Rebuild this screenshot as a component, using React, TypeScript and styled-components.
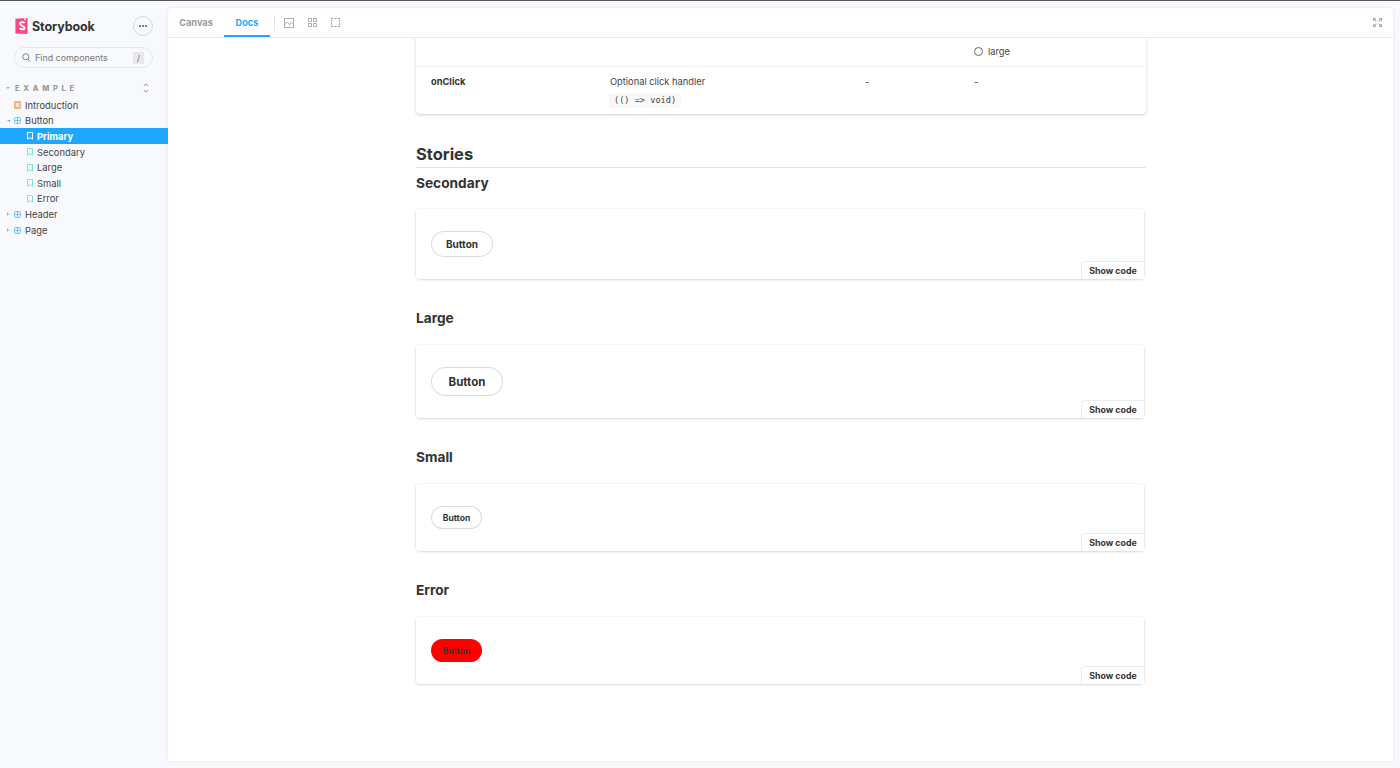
import React from 'react'
import styled, { createGlobalStyle } from 'styled-components'

const GlobalStyle = createGlobalStyle`
  html, body {
    margin: 0;
    padding: 0;
    height: 100%;
    overflow: hidden;
    background: #f6f9fc;
  }
  body {
    font-family: Inter, "Liberation Sans", sans-serif;
    color: #333;
  }
  * {
    box-sizing: border-box;
  }
`

const Shell = styled.div`
  display: flex;
  width: 1400px;
  height: 768px;
  border-top: 1px solid #55565a;
  background: #f7f9fd;
`

// SIDEBAR

const Sidebar = styled.aside`
  width: 168px;
  flex: none;
  padding-top: 15px;
`

const Brand = styled.div`
  display: flex;
  align-items: center;
  justify-content: space-between;
  height: 20px;
  padding: 0 15px;
`

const Logo = styled.div`
  display: flex;
  align-items: center;
  gap: 4px;
  font-size: 12.5px;
  font-weight: 700;
  letter-spacing: -0.1px;
  color: #333;
`

const MenuButton = styled.div`
  width: 20px;
  height: 20px;
  border-radius: 50%;
  border: 1px solid #d5d8dc;
  display: flex;
  align-items: center;
  justify-content: center;
  gap: 1px;
`

const Dot = styled.span`
  width: 2px;
  height: 2px;
  border-radius: 50%;
  background: #555;
`

const Search = styled.div`
  display: flex;
  align-items: center;
  height: 21px;
  margin: 11px 15px 0 14px;
  padding: 0 3px 0 7px;
  border: 1px solid #e3e6ea;
  border-radius: 11px;
  font-size: 8.9px;
  color: #777;
  gap: 4px;
`

const SearchLabel = styled.span`
  flex: 1;
`

const Kbd = styled.span`
  width: 11px;
  height: 12px;
  background: #e8e8e8;
  font-size: 8px;
  line-height: 12px;
  text-align: center;
  color: #666;
  margin-right: 5px;
`

const GroupHeading = styled.div`
  display: flex;
  align-items: center;
  height: 12px;
  margin-top: 14px;
  padding: 0 19px 0 6px;
  font-size: 7.5px;
  font-weight: 800;
  letter-spacing: 3.7px;
  color: #9a9a9a;
`

const GroupCaret = styled.span`
  width: 0;
  height: 0;
  border-left: 2px solid transparent;
  border-right: 2px solid transparent;
  border-top: 2px solid #aaa;
`

const GroupLabel = styled.span`
  flex: 1;
  padding-left: 5px;
`

const Tree = styled.div`
  margin-top: 3px;
`

const TreeRow = styled.div<{ $level?: number; $active?: boolean }>`
  display: flex;
  align-items: center;
  height: 15.6px;
  padding-top: 1px;
  padding-left: ${(p) => (p.$level === 1 ? 27 : 14)}px;
  gap: 4px;
  font-size: 9.4px;
  position: relative;
  font-weight: ${(p) => (p.$active ? 700 : 400)};
  color: ${(p) => (p.$active ? '#fff' : '#444')};
  background: ${(p) => (p.$active ? '#1ea7fd' : 'transparent')};
`

const Caret = styled.span<{ $open?: boolean }>`
  position: absolute;
  left: 7px;
  top: ${(p) => (p.$open ? 7 : 6)}px;
  width: 0;
  height: 0;
  ${(p) =>
    p.$open
      ? `border-left: 2px solid transparent; border-right: 2px solid transparent; border-top: 2px solid #aaa;`
      : `border-top: 2px solid transparent; border-bottom: 2px solid transparent; border-left: 2px solid #aaa;`}
`

// MAIN PANEL

const Panel = styled.main`
  width: 1225px;
  height: 753px;
  margin-top: 7px;
  background: #fff;
  border-radius: 4px 4px 0 0;
  box-shadow: 0 0 4px rgba(0, 0, 0, 0.08);
  overflow: hidden;
  display: flex;
  flex-direction: column;
`

const Toolbar = styled.div`
  display: flex;
  align-items: stretch;
  height: 29px;
  flex: none;
  box-shadow: 0 1px 0 #ececec;
  position: relative;
`

const Tab = styled.div<{ $active?: boolean }>`
  display: flex;
  align-items: center;
  justify-content: center;
  width: ${(p) => (p.$active ? 46 : 56)}px;
  padding-top: 2px;
  font-size: 9.2px;
  font-weight: 700;
  color: ${(p) => (p.$active ? '#1ea7fd' : '#999')};
  border-bottom: 2px solid ${(p) => (p.$active ? '#1ea7fd' : 'transparent')};
`

const Divider = styled.div`
  width: 1px;
  height: 16px;
  margin: 7px 9px 0 4px;
  background: #e4e4e4;
`

const Tools = styled.div`
  display: flex;
  align-items: center;
  gap: 14px;
`

const Spacer = styled.div`
  flex: 1;
`

const Expand = styled.div`
  display: flex;
  align-items: center;
  padding-right: 11px;
`

const Scroller = styled.div`
  flex: 1;
  overflow: hidden;
`

const Column = styled.div`
  width: 730px;
  margin-left: 248px;
`

const TableCard = styled.div`
  width: 730px;
  background: #fff;
  border-radius: 0 0 4px 4px;
  box-shadow: 0 1px 3px rgba(0, 0, 0, 0.2);
`

const TableRow = styled.div<{ $height: number; $ruled?: boolean }>`
  display: grid;
  grid-template-columns: 179px 255px 109px 1fr;
  height: ${(p) => p.$height}px;
  padding-left: 15px;
  border-bottom: ${(p) => (p.$ruled ? '1px solid #f0f0f0' : 'none')};
  font-size: 9.3px;
  color: #444;
`

const Cell = styled.div<{ $top: number }>`
  padding-top: ${(p) => p.$top}px;
`

const PropName = styled(Cell)`
  font-weight: 700;
  color: #333;
`

const Radio = styled.div`
  display: flex;
  align-items: center;
  gap: 5px;
`

const RadioMark = styled.span`
  width: 9px;
  height: 9px;
  border: 1px solid #666;
  border-radius: 50%;
`

const TypeCode = styled.code`
  display: inline-block;
  margin: 6px 0 0 -1px;
  padding: 0 5px;
  height: 15px;
  line-height: 15px;
  background: #f8f8f8;
  border-radius: 3px;
  font-family: "DejaVu Sans Mono", "Liberation Mono", monospace;
  font-size: 8.6px;
  color: #444;
`

const StoriesTitle = styled.h2`
  margin: 30px 0 0;
  height: 24px;
  line-height: 20px;
  font-size: 16.5px;
  font-weight: 700;
  color: #333;
  border-bottom: 1px solid #e2e2e2;
`

const StoryTitle = styled.h3<{ $top: number }>`
  margin: ${(p) => p.$top}px 0 0;
  height: 18px;
  line-height: 18px;
  font-size: 13.7px;
  font-weight: 700;
  color: #333;
`

const Preview = styled.div<{ $height: number; $gap: number }>`
  position: relative;
  width: 728px;
  height: ${(p) => p.$height}px;
  margin-top: ${(p) => p.$gap}px;
  padding-left: 15px;
  display: flex;
  align-items: center;
  background: #fff;
  border-radius: 4px;
  box-shadow: 0 1px 3px rgba(0, 0, 0, 0.13), 0 0 0 1px rgba(0, 0, 0, 0.03);
`

const sizes = {
  small: { w: 51, h: 23, font: 8.6 },
  medium: { w: 62, h: 26, font: 10 },
  large: { w: 72, h: 29, font: 11.5 },
}

const DemoButton = styled.div<{ $size: keyof typeof sizes; $error?: boolean }>`
  display: flex;
  align-items: center;
  justify-content: center;
  width: ${(p) => sizes[p.$size].w}px;
  height: ${(p) => sizes[p.$size].h}px;
  font-size: ${(p) => sizes[p.$size].font}px;
  font-weight: 700;
  color: #333;
  border-radius: 15px;
  background: ${(p) => (p.$error ? '#ff0000' : 'transparent')};
  box-shadow: ${(p) => (p.$error ? 'none' : 'inset 0 0 0 1px #dcdcdc')};
`

const ShowCode = styled.div`
  position: absolute;
  right: 0;
  bottom: 0;
  width: 63px;
  height: 18px;
  padding-bottom: 1px;
  display: flex;
  align-items: center;
  justify-content: center;
  font-size: 8.8px;
  font-weight: 700;
  color: #333;
  background: #fff;
  border-top: 1px solid #ececec;
  border-left: 1px solid #ececec;
  border-radius: 4px 0 0 0;
`

// ICONS

const StorybookMark = () => (
  <svg width="13" height="16" viewBox="0 0 13 16">
    <path d="M0.4 0.8 L12.6 0 V16 L0.4 15.4 Z" fill="#ff4785" />
    <path
      d="M9.6 5c-.6-.6-1.3-.9-2.3-.9-1.4 0-2.3.7-2.3 1.7 0 2.4 4.5 1.6 4.5 3.9 0 1-.9 1.6-2.2 1.6-1.1 0-2-.4-2.7-1.2"
      fill="none"
      stroke="#fff"
      strokeWidth="1.9"
    />
    <path d="M9.2 0.2 V2.4 L10 1.8 L10.8 2.4 V0.1 Z" fill="#fff" />
  </svg>
)

const SearchIcon = () => (
  <svg width="9" height="9" viewBox="0 0 10 10" fill="none" stroke="#777" strokeWidth="1">
    <circle cx="4.2" cy="4.2" r="3.4" />
    <path d="M6.8 6.8 L9.4 9.4" />
  </svg>
)

const SortIcon = () => (
  <svg width="6" height="10" viewBox="0 0 6 10" fill="none" stroke="#888" strokeWidth="0.9">
    <path d="M0.8 3 L3 0.9 L5.2 3" />
    <path d="M0.8 7 L3 9.1 L5.2 7" />
  </svg>
)

const DocIcon = () => (
  <svg width="7" height="8" viewBox="0 0 7 8">
    <rect width="7" height="8" rx="1" fill="#f5b27a" />
    <rect x="1.7" y="2" width="3.6" height="4" fill="#fde6d0" />
  </svg>
)

const ComponentIcon = () => (
  <svg width="7" height="7" viewBox="0 0 7 7" fill="none" stroke="#7cc0f2" strokeWidth="1">
    <rect x="0.5" y="0.5" width="6" height="6" rx="1.5" />
    <path d="M3.5 0.5 V6.5 M0.5 3.5 H6.5" />
  </svg>
)

const BookmarkIcon = ({ active }: { active?: boolean }) => (
  <svg width="6" height="8" viewBox="0 0 6 8" fill="none" stroke={active ? '#fff' : '#7fe3d9'} strokeWidth="1">
    <path d="M0.5 0.5 H5.5 V7.2 L3 5.6 L0.5 7.2 Z" />
  </svg>
)

const ImageIcon = () => (
  <svg width="10" height="10" viewBox="0 0 10 10" fill="none" stroke="#aaa" strokeWidth="0.9">
    <rect x="0.5" y="0.5" width="9" height="9" />
    <path d="M0.5 7 L3 4 L6.5 7.5 M5.5 6 L7.5 4.5 L9.5 6.5" />
  </svg>
)

const GridIcon = () => (
  <svg width="9" height="9" viewBox="0 0 9 9" fill="none" stroke="#aaa" strokeWidth="0.9">
    <rect x="0.5" y="0.5" width="3" height="3" />
    <rect x="5.5" y="0.5" width="3" height="3" />
    <rect x="0.5" y="5.5" width="3" height="3" />
    <rect x="5.5" y="5.5" width="3" height="3" />
  </svg>
)

const OutlineIcon = () => (
  <svg width="9" height="9" viewBox="0 0 9 9" fill="none" stroke="#999" strokeWidth="1">
    <path d="M0 0.5 H2 M3.5 0.5 H5.5 M7 0.5 H9 M0 8.5 H2 M3.5 8.5 H5.5 M7 8.5 H9" />
    <path d="M0.5 2 V3.5 M0.5 5 V7 M8.5 2 V3.5 M8.5 5 V7" />
  </svg>
)

const ExpandIcon = () => (
  <svg width="9" height="9" viewBox="0 0 9 9" fill="none" stroke="#aaa" strokeWidth="1.2">
    <path d="M0.5 3 V0.5 H3 M0.5 0.5 L3.4 3.4" />
    <path d="M6 0.5 H8.5 V3 M8.5 0.5 L5.6 3.4" />
    <path d="M0.5 6 V8.5 H3 M0.5 8.5 L3.4 5.6" />
    <path d="M8.5 6 V8.5 H6 M8.5 8.5 L5.6 5.6" />
  </svg>
)

const stories = ['Primary', 'Secondary', 'Large', 'Small', 'Error']

const previews: {
  title: string
  top: number
  gap: number
  height: number
  size: keyof typeof sizes
  error?: boolean
}[] = [
  { title: 'Secondary', top: 6, gap: 17, height: 70, size: 'medium' },
  { title: 'Large', top: 30, gap: 18, height: 73, size: 'large' },
  { title: 'Small', top: 30, gap: 18, height: 67, size: 'small' },
  { title: 'Error', top: 30, gap: 18, height: 67, size: 'small', error: true },
]

export default function App(): JSX.Element {
  return (
    <Shell>
      <GlobalStyle />
      <Sidebar>
        <Brand>
          <Logo>
            <StorybookMark />
            Storybook
          </Logo>
          <MenuButton>
            <Dot />
            <Dot />
            <Dot />
          </MenuButton>
        </Brand>
        <Search>
          <SearchIcon />
          <SearchLabel>Find components</SearchLabel>
          <Kbd>/</Kbd>
        </Search>
        <GroupHeading>
          <GroupCaret />
          <GroupLabel>EXAMPLE</GroupLabel>
          <SortIcon />
        </GroupHeading>
        <Tree>
          <TreeRow>
            <DocIcon />
            Introduction
          </TreeRow>
          <TreeRow>
            <Caret $open />
            <ComponentIcon />
            Button
          </TreeRow>
          {stories.map((name, i) => (
            <TreeRow key={name} $level={1} $active={i === 0}>
              <BookmarkIcon active={i === 0} />
              {name}
            </TreeRow>
          ))}
          <TreeRow>
            <Caret />
            <ComponentIcon />
            Header
          </TreeRow>
          <TreeRow>
            <Caret />
            <ComponentIcon />
            Page
          </TreeRow>
        </Tree>
      </Sidebar>
      <Panel>
        <Toolbar>
          <Tab>Canvas</Tab>
          <Tab $active>Docs</Tab>
          <Divider />
          <Tools>
            <ImageIcon />
            <GridIcon />
            <OutlineIcon />
          </Tools>
          <Spacer />
          <Expand>
            <ExpandIcon />
          </Expand>
        </Toolbar>
        <Scroller>
          <Column>
            <TableCard>
              <TableRow $height={30} $ruled>
                <Cell $top={0} />
                <Cell $top={0} />
                <Cell $top={0} />
                <Cell $top={9}>
                  <Radio>
                    <RadioMark />
                    large
                  </Radio>
                </Cell>
              </TableRow>
              <TableRow $height={47}>
                <PropName $top={9}>onClick</PropName>
                <Cell $top={9}>
                  Optional click handler
                  <br />
                  <TypeCode>{'(() => void)'}</TypeCode>
                </Cell>
                <Cell $top={9}>-</Cell>
                <Cell $top={9}>-</Cell>
              </TableRow>
            </TableCard>
            <StoriesTitle>Stories</StoriesTitle>
            {previews.map((story) => (
              <React.Fragment key={story.title}>
                <StoryTitle $top={story.top}>{story.title}</StoryTitle>
                <Preview $height={story.height} $gap={story.gap}>
                  <DemoButton $size={story.size} $error={story.error}>
                    Button
                  </DemoButton>
                  <ShowCode>Show code</ShowCode>
                </Preview>
              </React.Fragment>
            ))}
          </Column>
        </Scroller>
      </Panel>
    </Shell>
  )
}
